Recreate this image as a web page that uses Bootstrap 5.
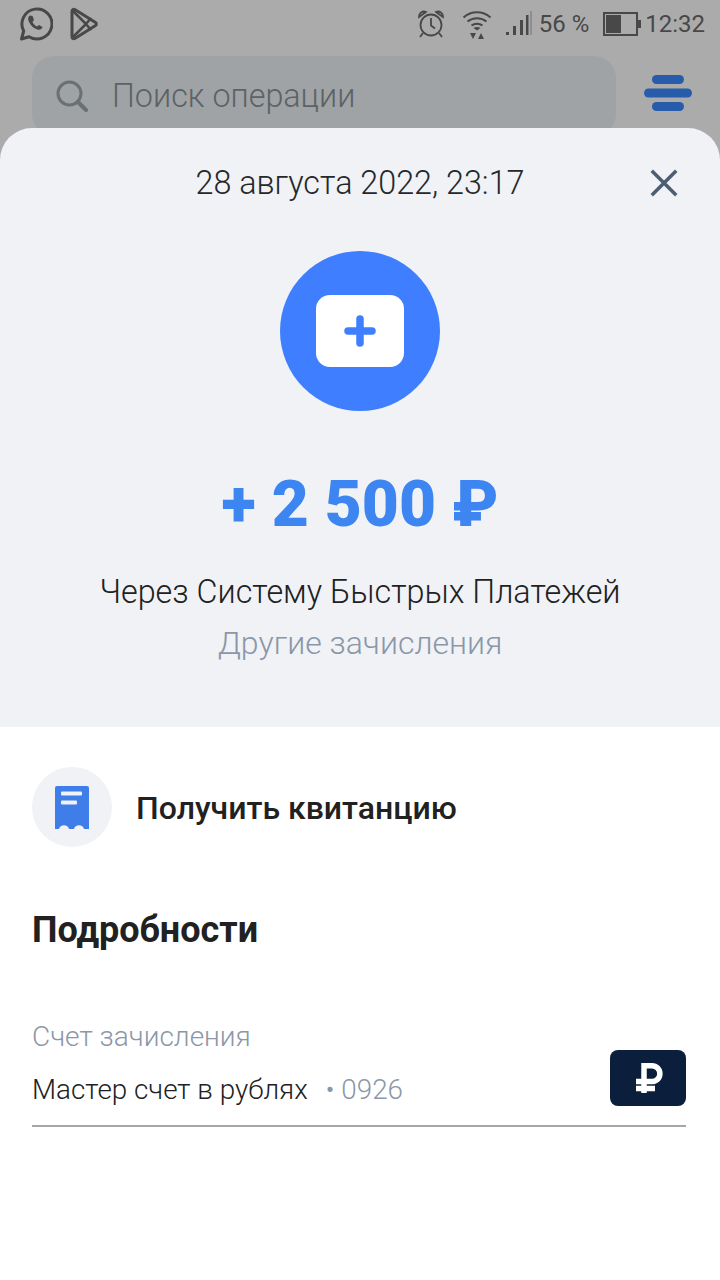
<!DOCTYPE html>
<html lang="ru">
<head>
    <meta charset="UTF-8">
    <meta name="viewport" content="width=device-width, initial-scale=1.0">
    <title>Операция</title>
    <link href="https://cdn.jsdelivr.net/npm/bootstrap@5.3.0/dist/css/bootstrap.min.css" rel="stylesheet">
    <style>
        body {
            font-family: Roboto, "Noto Sans", sans-serif;
            background-color: #ababab;
            width: 720px;
            height: 1280px;
            overflow: hidden;
            color: #212121;
        }
        .top-area { height: 128px; overflow: hidden; }
        .status-bar { height: 56px; padding: 0 15px 8px 19px; color: #444; }
        .status-text { font-size: 24px; font-weight: 400; line-height: 1; color: #484848; }
        .gap-alarm { margin-left: 17px; }
        .gap-signal { margin-left: 13px; }
        .gap-percent { margin-left: 6px; }
        .gap-battery { margin-left: 14px; }
        .gap-clock { margin-left: 4px; }
        .search-row { padding-left: 32px; padding-right: 28px; }
        .search-box {
            width: 584px;
            height: 80px;
            background-color: #a0a3a5;
            border-radius: 22px;
            padding-left: 24px;
        }
        .search-label { font-size: 32.300px; font-weight: 300; color: #5d6265; margin-left: 24px; }
        .burger-wrap { padding-top: 19px; }
        .sheet-head {
            height: 599px;
            background-color: #f0f2f6;
            border-radius: 32px 32px 0 0;
        }
        .date-row { padding-top: 34px; height: 123px; }
        .date-text { font-size: 32.300px; font-weight: 300; line-height: 42px; color: #25282b; }
        .close-btn { position: absolute; right: 42px; top: 41px; line-height: 0; }
        .main-circle { width: 160px; height: 160px; border-radius: 50%; background-color: #3f7fff; }
        .money-box { width: 88px; height: 72px; border-radius: 14px; background-color: #fff; }
        .amount { font-size: 64px; font-weight: 900; line-height: 76px; color: #3d85f0; margin-top: 56px; }
        .pay-title { font-size: 32.300px; font-weight: 300; line-height: 42px; color: #212121; margin-top: 28px; }
        .pay-sub { font-size: 32px; font-weight: 300; line-height: 42px; color: #8b97a8; margin-top: 9px; }
        .sheet-body { background-color: #fff; height: 553px; padding: 40px 34px 0 32px; }
        .receipt-circle { width: 80px; height: 80px; border-radius: 50%; background-color: #f0f2f6; }
        .receipt-text { font-size: 32px; font-weight: 500; margin-left: 24px; padding-top: 2px; color: #212121; }
        .details-title { font-size: 36px; font-weight: 700; line-height: 44px; margin-top: 61px; color: #212121; }
        .field-label { font-size: 28px; font-weight: 300; line-height: 32px; color: #8b97a8; margin-top: 69px; }
        .field-row { border-bottom: 2px solid #a6a6a6; height: 77px; margin-top: -3px; }
        .field-value { font-size: 27.800px; font-weight: 300; color: #212121; line-height: 32px; padding-top: 24px; }
        .field-num { color: #8b97a8; margin-left: 11px; }
        .rub-chip { width: 76px; height: 56px; border-radius: 8px; background-color: #0b1f3c; }
        .rub-glyph { margin-left: 2px; }
    </style>
</head>
<body>
    <div class="top-area">
        <div class="status-bar d-flex align-items-center justify-content-between">
            <div class="d-flex align-items-center gap-3">
                <svg width="34" height="36" viewBox="0 0 34 36" fill="none" stroke="#484848" stroke-width="3">
                    <path d="M2.500 33l2.200-8A15 15 0 1 1 10 30.700z" stroke-linejoin="round"/>
                    <path d="M11 9.500c-2 1-2.500 3.500-1 6.500 2 4 5 6.500 8.500 7.500 2.500.700 4.500-.5 5-2.500l-3.500-2-2 1.500c-2-1-3.500-2.500-4.500-4.500l1.500-2-1.500-4z" fill="#484848" stroke="none"/>
                </svg>
                <svg width="30" height="34" viewBox="0 0 30 34" fill="none" stroke="#484848" stroke-width="3" stroke-linejoin="round">
                    <path d="M3 4.500c0-2 1.500-2.800 3.200-1.800l20 12.500c1.500 1 1.500 2.600 0 3.600l-20 12.500c-1.700 1-3.200.2-3.200-1.800z"/>
                    <path d="M4 4l13 13L4 30M17 17l5-6M17 17l5 6" stroke-width="2.500"/>
                </svg>
            </div>
            <div class="d-flex align-items-center">
                <svg width="28" height="30" viewBox="0 0 28 30" fill="none" stroke="#484848" stroke-width="1.800">
                    <circle cx="14" cy="16" r="10.500"/>
                    <path d="M14 9v7.500l4 3M2 8a5 5 0 0 1 7-5zM26 8a5 5 0 0 0-7-5zM6 24l-3 4M22 24l3 4"/>
                </svg>
                <svg class="gap-alarm" width="30" height="30" viewBox="0 0 30 30" fill="none" stroke="#484848" stroke-width="2">
                    <path d="M1.500 8.500c8-7 19-7 27 0M5.500 12.500c5.500-4.500 13.500-4.500 19 0M9.500 16.500c3-2.500 8-2.500 11 0"/>
                    <path d="M11.500 19c2-1.500 5-1.500 7 0L15 21.500z" fill="#484848" stroke="none"/>
                    <path d="M8 24h6l-3 6zM22 30h-6l3-6z" fill="#484848" stroke="none"/>
                </svg>
                <svg class="gap-signal" width="28" height="26" viewBox="0 0 28 26" fill="#484848">
                    <rect x="1" y="21" width="3" height="3"/>
                    <rect x="8" y="15" width="3" height="9"/>
                    <rect x="15" y="9" width="3" height="15"/>
                    <rect x="21" y="4" width="2.500" height="20"/>
                    <rect x="25" y="0" width="2" height="24" fill="#8e8e8e"/>
                </svg>
                <span class="status-text gap-percent">56 %</span>
                <svg class="gap-battery" width="38" height="24" viewBox="0 0 38 24" fill="none">
                    <rect x="1" y="1" width="33" height="22" stroke="#484848" stroke-width="2"/>
                    <rect x="3" y="3" width="15" height="18" fill="#484848"/>
                    <rect x="35" y="8" width="3" height="8" fill="#484848"/>
                </svg>
                <span class="status-text gap-clock">12:32</span>
            </div>
        </div>
        <div class="search-row d-flex justify-content-between">
            <div class="search-box d-flex align-items-center">
                <svg width="32" height="32" viewBox="0 0 32 32" fill="none" stroke="#6b7073" stroke-width="3" stroke-linecap="round">
                    <circle cx="13.500" cy="13.500" r="11.500"/>
                    <path d="M22 22l8 8" stroke-width="4"/>
                </svg>
                <span class="search-label">Поиск операции</span>
            </div>
            <div class="burger-wrap">
                <svg class="d-block" width="48" height="36" viewBox="0 0 48 36" fill="#275cab">
                    <rect x="8" y="0" width="32" height="9" rx="4.500"/>
                    <rect x="0" y="13.500" width="48" height="9" rx="4.500"/>
                    <rect x="8" y="27" width="32" height="9" rx="4.500"/>
                </svg>
            </div>
        </div>
    </div>

    <div class="sheet-head position-relative text-center">
        <div class="date-row">
            <div class="date-text">28 августа 2022, 23:17</div>
        </div>
        <div class="close-btn">
            <svg width="28" height="28" viewBox="0 0 28 28" stroke="#4d5d72" stroke-width="3.500" stroke-linecap="square">
                <path d="M3 3l22 22M25 3L3 25"/>
            </svg>
        </div>
        <div class="main-circle d-flex align-items-center justify-content-center mx-auto">
            <div class="money-box d-flex align-items-center justify-content-center">
                <svg width="32" height="32" viewBox="0 0 32 32" stroke="#3f7fff" stroke-width="7.500" stroke-linecap="round">
                    <path d="M16 4v24M4 16h24"/>
                </svg>
            </div>
        </div>
        <div class="amount">+ 2 500 ₽</div>
        <div class="pay-title">Через Систему Быстрых Платежей</div>
        <div class="pay-sub">Другие зачисления</div>
    </div>

    <div class="sheet-body">
        <div class="d-flex align-items-center">
            <div class="receipt-circle d-flex align-items-center justify-content-center">
                <svg width="34" height="43" viewBox="0 0 34 43">
                    <path d="M2 0h30a2 2 0 0 1 2 2v41h-5a5.200 5.200 0 0 0-10 0h-5a5.200 5.200 0 0 0-10 0H0V2a2 2 0 0 1 2-2z" fill="#3f7de8"/>
                    <rect x="6" y="5.500" width="21" height="4" rx="1" fill="#f0f2f6"/>
                    <rect x="6" y="14.500" width="16" height="4" rx="1" fill="#f0f2f6"/>
                </svg>
            </div>
            <div class="receipt-text">Получить квитанцию</div>
        </div>
        <div class="details-title">Подробности</div>
        <div class="field-label">Счет зачисления</div>
        <div class="field-row d-flex justify-content-between align-items-start">
            <div class="field-value">Мастер счет в рублях <span class="field-num">• 0926</span></div>
            <div class="rub-chip d-flex align-items-center justify-content-center">
                <svg class="rub-glyph" width="27" height="30" viewBox="0 0 27 30" fill="none" stroke="#fff" stroke-width="5.500">
                    <path d="M8 30V2.750h8a7.900 7.900 0 0 1 0 15.800H0M0 25.500h19"/>
                </svg>
            </div>
        </div>
    </div>
    <script src="https://cdn.jsdelivr.net/npm/bootstrap@5.3.0/dist/js/bootstrap.bundle.min.js"></script>
</body>
</html>
